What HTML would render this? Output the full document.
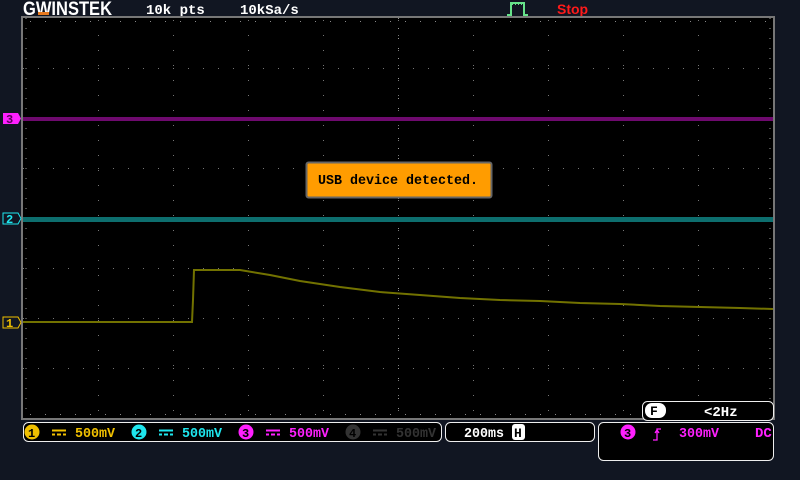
<!DOCTYPE html>
<html><head><meta charset="utf-8"><style>
html,body{margin:0;padding:0;background:#111622;width:800px;height:480px;overflow:hidden}
svg{display:block}
text{font-family:"Liberation Mono",monospace;font-weight:bold}
</style></head><body>
<svg width="800" height="480" viewBox="0 0 800 480" xmlns="http://www.w3.org/2000/svg">
<rect width="800" height="480" fill="#111622"/>
<!-- header -->
<text x="23" y="15" font-size="19" fill="#fff" textLength="89" lengthAdjust="spacingAndGlyphs" style="font-family:'Liberation Sans',sans-serif;font-weight:bold">GWINSTEK</text>
<rect x="38" y="12" width="11" height="3" fill="#e87a1e"/>
<text x="146" y="14" font-size="14" fill="#fff">10k pts</text>
<text x="240" y="14" font-size="14" fill="#fff">10kSa/s</text>
<path d="M507 15H511V3H524V15H528" stroke="#66e38a" stroke-width="2" fill="none"/>
<path d="M512 4h1M515 4h1M518 4h1M521 4h1" stroke="#66e38a" stroke-width="2"/>
<text x="557" y="14" font-size="14" fill="#ff1a1a" style="font-family:'Liberation Sans',sans-serif;font-weight:bold">Stop</text>
<!-- screen -->
<rect x="22" y="17" width="752" height="402" fill="#000" stroke="#777" stroke-width="2"/>
<g stroke="#777" stroke-width="1" stroke-dasharray="1 14">
<path d="M98.5 20V418M173.5 20V418M248.5 20V418M323.5 20V418M398.5 20V418M473.5 20V418M548.5 20V418M623.5 20V418M698.5 20V418"/>
<path d="M23 68.5H773M23 118.5H773M23 168.5H773M23 218.5H773M23 268.5H773M23 318.5H773M23 368.5H773"/>
</g>
<g stroke="#888" stroke-width="1">
<path d="M23 21.5H773M23 414.5H773M23 218.5H773" stroke-dasharray="1 14" stroke-dashoffset="-7"/>
</g>
<g stroke="#999" stroke-width="1" stroke-dasharray="1 9">
<path d="M26 18V418M770 18V418M398.5 18V418"/>
</g>
<!-- traces -->
<rect x="23" y="117" width="750" height="4" fill="#6e0a6e"/>
<rect x="23" y="217" width="750" height="5" fill="#0d6e6e"/>
<path d="M23 322H192L193 300L194 270H240L270 275L300 281L340 287L380 292L420 295L460 298L500 300L540 301L580 303L620 304L660 306L700 307L740 308L773 309" stroke="#727200" stroke-width="2" fill="none"/>
<!-- channel markers -->
<path d="M3 113H18L21 118.5L18 124H3Z" fill="#ff20ff"/>
<text x="6" y="123" font-size="12" fill="#5a005a">3</text>
<path d="M3 213H18L21 218.5L18 224H3Z" fill="none" stroke="#1ee6ee" stroke-width="1"/>
<text x="6" y="223" font-size="12" fill="#1ee6ee">2</text>
<path d="M3 317H18L21 322.5L18 328H3Z" fill="none" stroke="#f0c000" stroke-width="1"/>
<text x="6" y="327" font-size="12" fill="#f0c000">1</text>
<!-- popup -->
<rect x="306.5" y="162.5" width="185" height="35" rx="2" fill="#ff9c00" stroke="#666" stroke-width="2"/>
<text x="318" y="184" font-size="14" fill="#000" textLength="160" lengthAdjust="spacingAndGlyphs">USB device detected.</text>
<!-- bottom bar -->
<rect x="23.5" y="422.5" width="418" height="19" rx="5" fill="#000" stroke="#eee" stroke-width="1"/>
<g font-size="14">
<circle cx="32" cy="432" r="7.5" fill="#f0c000"/><text x="28" y="437" font-size="12" fill="#000">1</text>
<path d="M52 430.5h14M52 434.5h3M57 434.5h4M63 434.5h3" stroke="#f0c000" stroke-width="2"/>
<text x="75" y="437" fill="#f0c000" textLength="40" lengthAdjust="spacingAndGlyphs">500mV</text>
<circle cx="139" cy="432" r="7.5" fill="#1ee6ee"/><text x="135" y="437" font-size="12" fill="#000">2</text>
<path d="M159 430.5h14M159 434.5h3M164 434.5h4M170 434.5h3" stroke="#1ee6ee" stroke-width="2"/>
<text x="182" y="437" fill="#1ee6ee" textLength="40" lengthAdjust="spacingAndGlyphs">500mV</text>
<circle cx="246" cy="432" r="7.5" fill="#ff20ff"/><text x="242" y="437" font-size="12" fill="#000">3</text>
<path d="M266 430.5h14M266 434.5h3M271 434.5h4M277 434.5h3" stroke="#ff20ff" stroke-width="2"/>
<text x="289" y="437" fill="#ff20ff" textLength="40" lengthAdjust="spacingAndGlyphs">500mV</text>
<circle cx="353" cy="432" r="7.5" fill="#333"/><text x="349" y="437" font-size="12" fill="#000">4</text>
<path d="M373 430.5h14M373 434.5h3M378 434.5h4M384 434.5h3" stroke="#333" stroke-width="2"/>
<text x="396" y="437" fill="#333" textLength="40" lengthAdjust="spacingAndGlyphs">500mV</text>
</g>
<rect x="445.5" y="422.5" width="149" height="19" rx="5" fill="#000" stroke="#eee" stroke-width="1"/>
<text x="464" y="437" font-size="14" fill="#fff" textLength="40" lengthAdjust="spacingAndGlyphs">200ms</text>
<rect x="512" y="424" width="13" height="16" rx="3" fill="#fff"/><text x="514" y="437" font-size="13" fill="#000">H</text>
<rect x="598.5" y="422.5" width="175" height="38" rx="5" fill="#000" stroke="#eee" stroke-width="1"/>
<circle cx="628" cy="432" r="7.5" fill="#ff20ff"/><text x="624" y="437" font-size="12" fill="#000">3</text>
<path d="M653 440H657V429H661M655 433L657 430L659 433" stroke="#ff20ff" stroke-width="1.3" fill="none"/>
<text x="679" y="437" font-size="14" fill="#ff20ff" textLength="40" lengthAdjust="spacingAndGlyphs">300mV</text>
<text x="755" y="437" font-size="14" fill="#ff20ff">DC</text>
<rect x="642.5" y="401.5" width="131" height="19" rx="5" fill="#000" stroke="#eee" stroke-width="1"/>
<rect x="645" y="403" width="21" height="15" rx="7" fill="#fff"/><text x="650" y="415" font-size="13" fill="#000">F</text>
<text x="704" y="416" font-size="14" fill="#fff">&lt;2Hz</text>
</svg>
</body></html>
